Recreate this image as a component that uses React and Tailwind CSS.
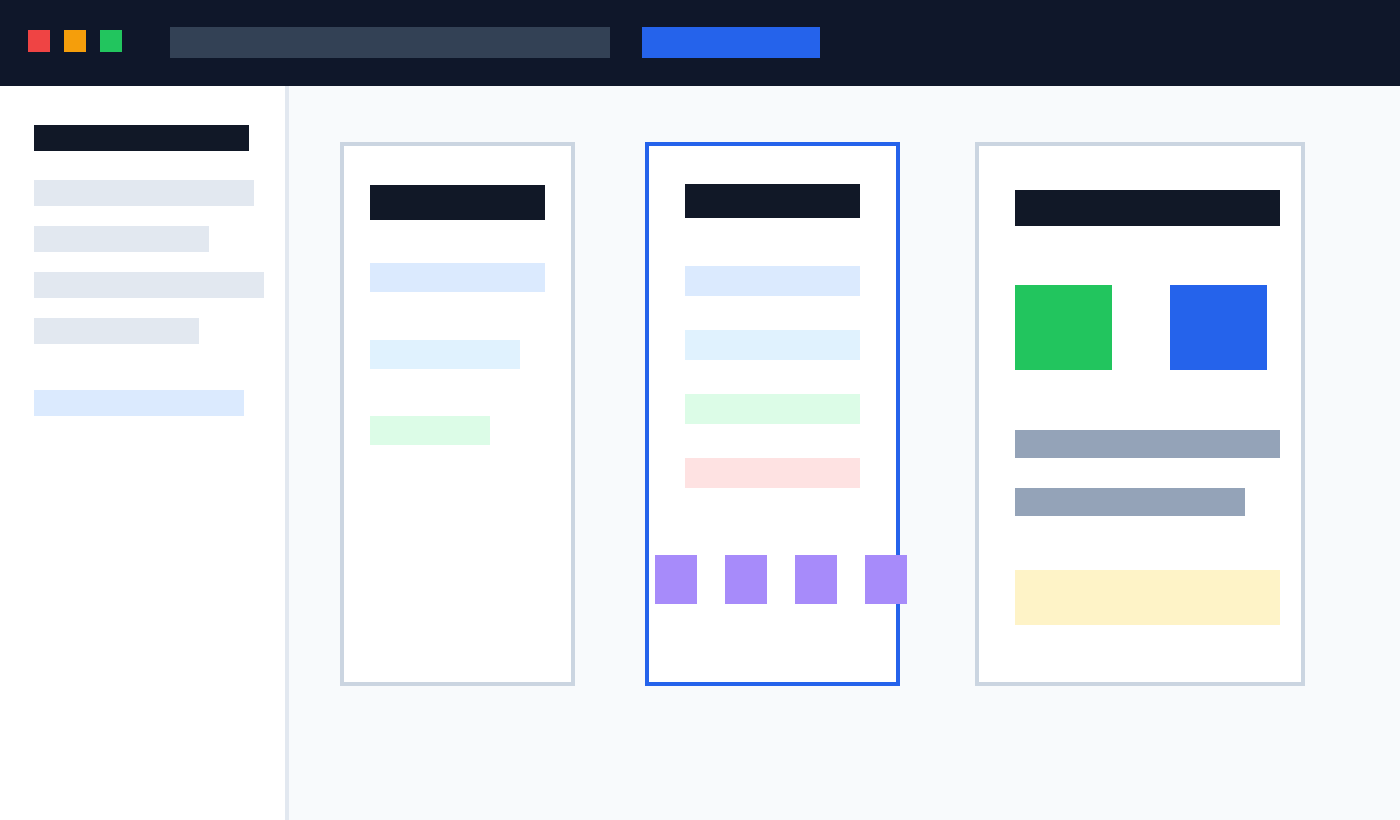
import React from 'react';

const Bar = ({ className }) => <div className={`shrink-0 ${className}`} />;

export default function App() {
  return (
    <div className="w-[1400px] h-[820px] flex flex-col overflow-hidden bg-[#f8fafc]">
      {/* top bar */}
      <div className="h-[86px] shrink-0 bg-[#0f172a] flex items-center">
        <div className="flex gap-[14px] ml-[28px] mb-[4px]">
          <div className="w-[22px] h-[22px] bg-[#ef4444]" />
          <div className="w-[22px] h-[22px] bg-[#f59e0b]" />
          <div className="w-[22px] h-[22px] bg-[#22c55e]" />
        </div>
        <div className="ml-[48px] w-[440px] h-[31px] bg-[#334155] mb-[1px]" />
        <div className="ml-[32px] w-[178px] h-[31px] bg-[#2563eb] mb-[1px]" />
      </div>

      <div className="flex flex-1 min-h-0">
        {/* sidebar */}
        <div className="w-[289px] shrink-0 bg-white border-r-4 border-[#e2e8f0] flex flex-col pl-[34px] pt-[39px]">
          <Bar className="w-[215px] h-[26px] bg-[#111827]" />
          <Bar className="w-[220px] h-[26px] bg-[#e2e8f0] mt-[29px]" />
          <Bar className="w-[175px] h-[26px] bg-[#e2e8f0] mt-[20px]" />
          <Bar className="w-[230px] h-[26px] bg-[#e2e8f0] mt-[20px]" />
          <Bar className="w-[165px] h-[26px] bg-[#e2e8f0] mt-[20px]" />
          <Bar className="w-[210px] h-[26px] bg-[#dbeafe] mt-[46px]" />
        </div>

        {/* canvas */}
        <div className="flex-1 flex items-start pl-[51px] pt-[56px]">
          {/* card 1 */}
          <div className="w-[235px] h-[544px] shrink-0 bg-white border-4 border-[#cbd5e1] flex flex-col pl-[26px] pt-[39px]">
            <Bar className="w-[175px] h-[35px] bg-[#111827]" />
            <Bar className="w-[175px] h-[29px] bg-[#dbeafe] mt-[43px]" />
            <Bar className="w-[150px] h-[29px] bg-[#e0f2fe] mt-[48px]" />
            <Bar className="w-[120px] h-[29px] bg-[#dcfce7] mt-[47px]" />
          </div>

          {/* card 2 */}
          <div className="ml-[70px] w-[255px] h-[544px] shrink-0 bg-white border-4 border-[#2563eb] flex flex-col pt-[38px]">
            <div className="pl-[36px] flex flex-col">
              <Bar className="w-[175px] h-[34px] bg-[#111827]" />
              <Bar className="w-[175px] h-[30px] bg-[#dbeafe] mt-[48px]" />
              <Bar className="w-[175px] h-[30px] bg-[#e0f2fe] mt-[34px]" />
              <Bar className="w-[175px] h-[30px] bg-[#dcfce7] mt-[34px]" />
              <Bar className="w-[175px] h-[30px] bg-[#fee2e2] mt-[34px]" />
            </div>
            <div className="flex gap-[28px] ml-[6px] mt-[67px] relative">
              <div className="w-[42px] h-[49px] shrink-0 bg-[#a78bfa]" />
              <div className="w-[42px] h-[49px] shrink-0 bg-[#a78bfa]" />
              <div className="w-[42px] h-[49px] shrink-0 bg-[#a78bfa]" />
              <div className="w-[42px] h-[49px] shrink-0 bg-[#a78bfa]" />
            </div>
          </div>

          {/* card 3 */}
          <div className="ml-[75px] w-[330px] h-[544px] shrink-0 bg-white border-4 border-[#cbd5e1] flex flex-col pl-[36px] pt-[44px]">
            <Bar className="w-[265px] h-[36px] bg-[#111827]" />
            <div className="flex gap-[58px] mt-[59px]">
              <div className="w-[97px] h-[85px] bg-[#22c55e]" />
              <div className="w-[97px] h-[85px] bg-[#2563eb]" />
            </div>
            <Bar className="w-[265px] h-[28px] bg-[#94a3b8] mt-[60px]" />
            <Bar className="w-[230px] h-[28px] bg-[#94a3b8] mt-[30px]" />
            <Bar className="w-[265px] h-[55px] bg-[#fef3c7] mt-[54px]" />
          </div>
        </div>
      </div>
    </div>
  );
}
